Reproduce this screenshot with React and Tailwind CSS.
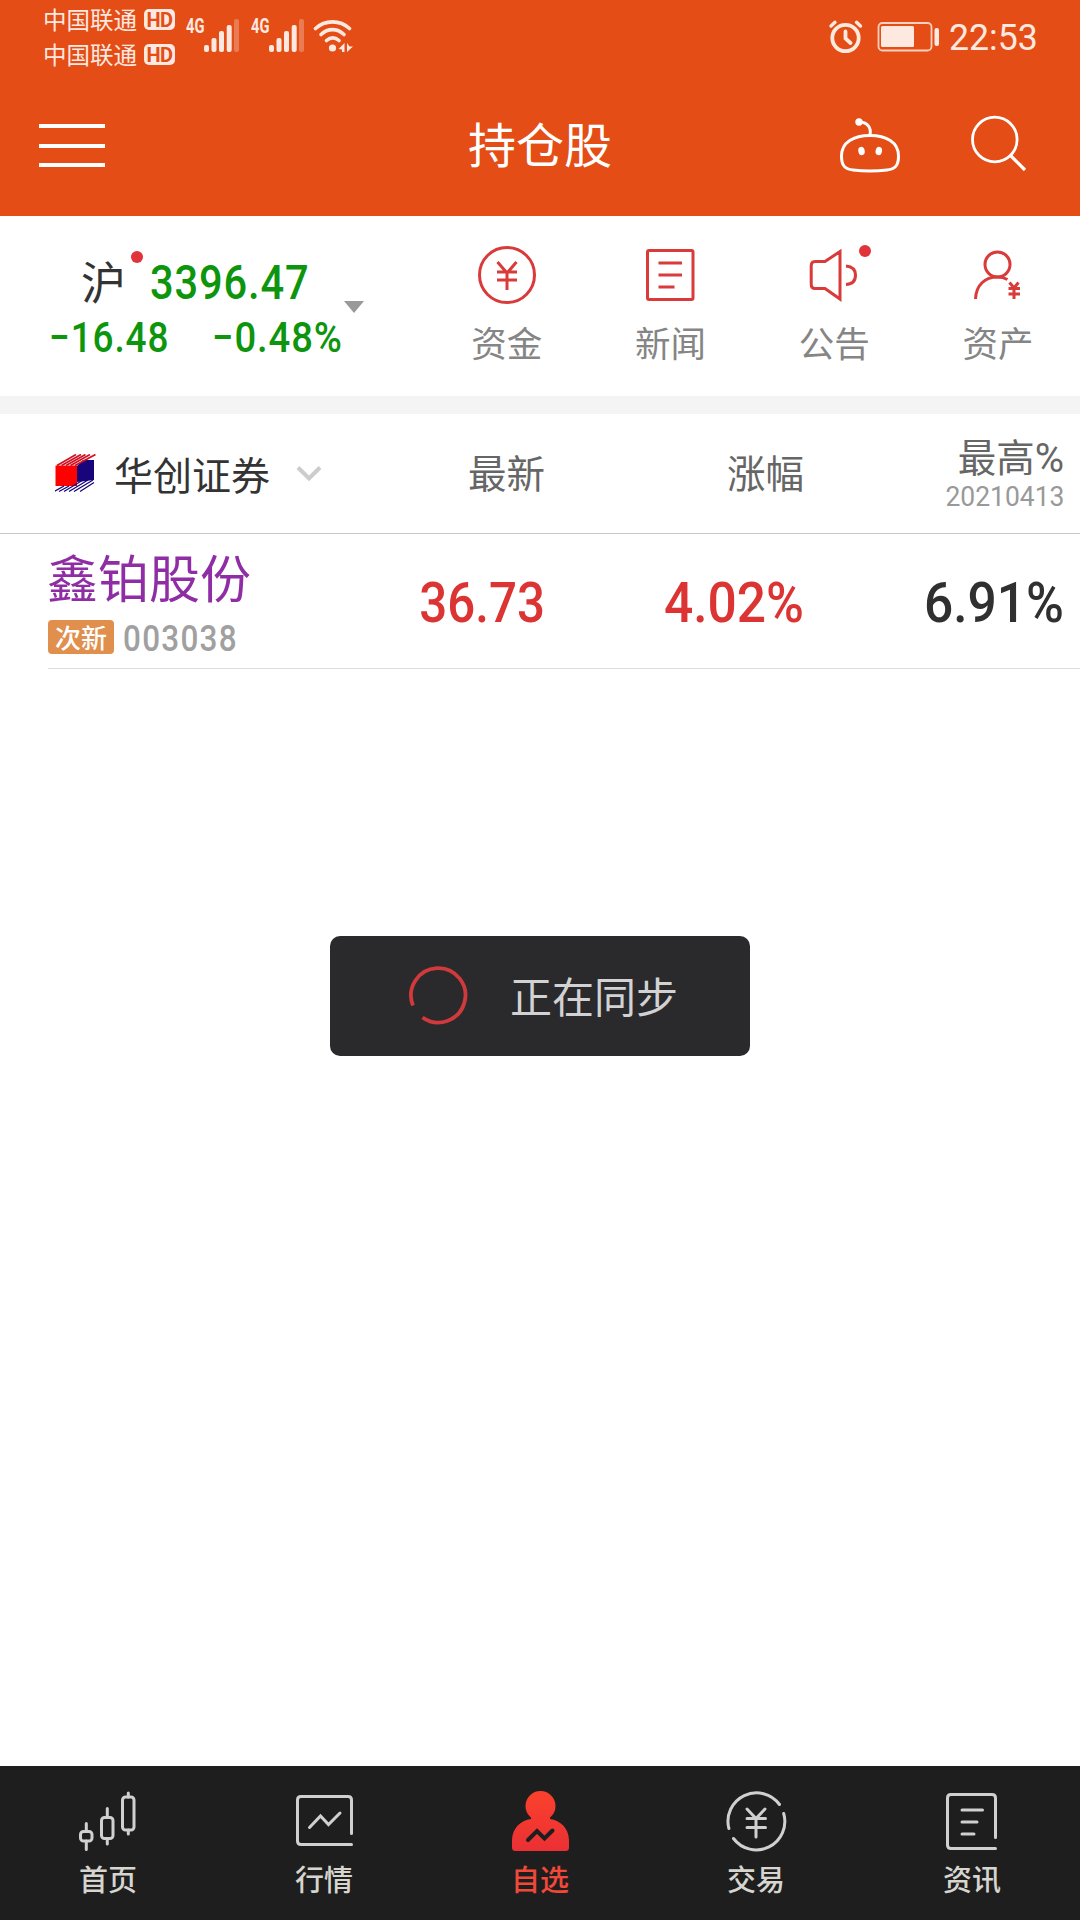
import React from "react";

const CJK = "font-['Noto_Sans_CJK_SC',sans-serif]";
const NUM = "font-['Roboto','Noto_Sans_CJK_SC',sans-serif]";

function Carrier() {
  return (
    <div className="flex h-[21px] items-center">
      <span className="-ml-px w-[101px] text-[23.5px] leading-[21px] whitespace-nowrap">中国联通</span>
      <span className="flex h-[21px] w-[31px] items-center justify-center rounded-[5px] bg-[#fde9e0] text-[20px] leading-none font-bold text-[#e44d15]">
        <span className={`${NUM} tracking-[-0.5px]`}>HD</span>
      </span>
    </div>
  );
}

function Signal() {
  return (
    <div className="flex w-[65px]">
      <span className={`${NUM} mt-[17px] w-[18px] text-[21px] leading-[19px] font-bold`}>
        <span className="inline-block origin-left scale-x-[0.7]">4G</span>
      </span>
      <svg className="mt-[19px]" width="35" height="33" viewBox="0 0 35 33" fill="#fde9e0">
        <rect x="0" y="26" width="5" height="7" rx="2" />
        <rect x="7.5" y="19" width="5" height="14" rx="2" />
        <rect x="15" y="12" width="5" height="21" rx="2" />
        <rect x="22.7" y="6" width="5" height="27" rx="2" />
        <rect x="30" y="0" width="5" height="33" rx="2" opacity="0.3" />
      </svg>
    </div>
  );
}

function StatusBar() {
  return (
    <div className={`${CJK} flex h-[72px] justify-between pr-[43px] pl-[44px] text-[#fde9e0]`}>
      <div className="flex">
        <div className="flex w-[142px] flex-col gap-[14px] pt-[9px]">
          <Carrier />
          <Carrier />
        </div>
        <Signal />
        <Signal />
        <svg className="mt-[18px] -ml-[3px]" width="42" height="36" viewBox="0 0 42 36" fill="none" stroke="#fde9e0" strokeWidth="3.6" strokeLinecap="round">
          <path d="M2.500 10.500C12 1.600 27 1.600 36.500 10.500" />
          <path d="M8 16.500C15 10 24 10 31 16.500" />
          <path d="M13.500 22.500C17.500 19 22 19 26 22.500" />
          <circle cx="19.500" cy="30" r="3.600" fill="#fde9e0" stroke="none" />
          <path d="M31.500 25V34H29V31.500L25.500 31Z M34 25V34L40 28.500H36.500Z" fill="#fde9e0" stroke="none" />
        </svg>
      </div>
      <div className="flex">
        <svg className="mt-[19px]" width="36" height="36" viewBox="0 0 36 36" fill="none" stroke="#fde9e0" strokeWidth="3.8" strokeLinecap="round">
          <circle cx="17.500" cy="19" r="13.200" />
          <path d="M17.500 12.500V19.500L22.500 24" />
          <path d="M3 7L7 3.300M28.500 3.300L32.500 7" strokeWidth="3.4" />
        </svg>
        <svg className="ml-[13px] mt-[21px]" width="64" height="31" viewBox="0 0 64 31" fill="none">
          <rect x="1.500" y="2" width="53" height="27.500" rx="4" stroke="#fbd0bf" strokeWidth="1.8" />
          <rect x="4" y="5" width="33" height="21" rx="1.500" fill="#fde9e0" />
          <rect x="57.500" y="7" width="4.500" height="18" rx="2" fill="#fde9e0" />
        </svg>
        <span className={`${NUM} mt-[18px] ml-[8px] w-[88px] text-[36px] leading-[40px] whitespace-nowrap`}>
          <span className="inline-block origin-left scale-x-[0.99]">22:53</span>
        </span>
      </div>
    </div>
  );
}

function TitleBar() {
  return (
    <div className="grid h-[144px] grid-cols-3 text-white">
      <div className="flex flex-col gap-[16px] pt-[52px] pl-[39px]">
        <i className="h-[4px] w-[66px] bg-white" />
        <i className="h-[4px] w-[66px] bg-white" />
        <i className="-mt-px h-[4px] w-[66px] bg-white" />
      </div>
      <h1 className={`${CJK} pt-[34px] text-center text-[48px] leading-[72px]`}>持仓股</h1>
      <div className="flex justify-end pr-[52px]">
        <svg className="mt-[43px]" width="64" height="60" viewBox="0 0 64 60" fill="none" stroke="#fff" strokeWidth="3">
          <path d="M32 20.500C48 20.500 60.500 27 60.500 41C60.500 51 57 54 49 55C38 56.300 26 56.300 15 55C7 54 3.500 51 3.500 41C3.500 27 16 20.500 32 20.500Z" />
          <path d="M32 20C33.500 12.500 29.500 7.500 22 7" />
          <circle cx="21" cy="7" r="3.700" fill="#fff" stroke="none" />
          <ellipse cx="23.500" cy="36" rx="3.200" ry="4.200" fill="#fff" stroke="none" transform="rotate(-12 23.500 36)" />
          <ellipse cx="40.800" cy="36" rx="3.200" ry="4.200" fill="#fff" stroke="none" transform="rotate(12 40.800 36)" />
        </svg>
        <svg className="mt-[42px] ml-[66px]" width="60" height="60" viewBox="0 0 60 60" fill="none" stroke="#fff" strokeWidth="2.800">
          <circle cx="26.800" cy="25.500" r="22.300" />
          <path d="M42.500 41.500L57 56" strokeWidth="3.200" />
        </svg>
      </div>
    </div>
  );
}

const shortcuts = [
  {
    label: "资金",
    icon: (
      <>
        <circle cx="32" cy="32" r="27.500" />
        <path d="M22.500 19L32 30L41.500 19M22 29H42M22 37H42M32 29V47" />
      </>
    ),
  },
  {
    label: "新闻",
    icon: (
      <>
        <rect x="8.500" y="7.500" width="45.500" height="49" rx="1.500" />
        <path d="M19.500 20H43M19.500 32H43M19.500 44H35.500" />
      </>
    ),
  },
  {
    label: "公告",
    dot: true,
    icon: (
      <>
        <path d="M38 8.500V56L23 45.500H13Q9.200 45.500 9.200 41V23Q9.200 18.500 13 18.500H23Z" />
        <path d="M44 23Q53.500 24 53.500 32Q53.500 41 44 41.500" />
      </>
    ),
  },
  {
    label: "资产",
    icon: (
      <>
        <circle cx="31.500" cy="21.500" r="12.500" />
        <path d="M9.500 56C10 42 19 34 31.500 34Q37 34 41.500 36.500" />
        <path d="M43.500 39.500L48 45L52.500 39.500M42.500 45.500H54M42.500 51H54M48 45V56" />
      </>
    ),
  },
];

function MarketStrip() {
  return (
    <section className={`${CJK} flex h-[180px] bg-white`}>
      <div className="flex w-[425px] pl-[50px]">
        <div className="w-[294px] pt-[34px] font-medium text-[#0d950d]">
          <div className="flex h-[66px]">
            <span className="relative ml-[31px] w-[69px] text-[45px] leading-[62px] font-normal text-[#333]">
              沪
              <i className="absolute top-px left-[50px] size-[12px] rounded-full bg-[#e1333a]" />
            </span>
            <span className={`${NUM} w-[160px] origin-left scale-x-[0.85] text-[49px] leading-[66px] tracking-[1px] whitespace-nowrap`}>3396.47</span>
          </div>
          <div className={`${NUM} flex h-[44px] text-[42px] leading-[44px] tracking-[1px] whitespace-nowrap`}>
            <span className="-ml-px w-[163px] origin-left scale-x-[0.88]">−16.48</span>
            <span className="w-[130px] origin-left scale-x-[0.91]">−0.48%</span>
          </div>
        </div>
        <svg className="mt-[85px]" width="20" height="12" viewBox="0 0 20 12" fill="#999">
          <path d="M0 0H20L10 12Z" />
        </svg>
      </div>
      <div className="grid flex-1 grid-cols-4">
        {shortcuts.map((s) => (
          <div key={s.label} className="flex flex-col items-center pt-[27px]">
            <div className="relative">
              <svg width="64" height="64" viewBox="0 0 64 64" fill="none" stroke="#d93a3a" strokeWidth="3">
                {s.icon}
              </svg>
              {s.dot && <i className="absolute top-[2px] right-[-5px] size-[12px] rounded-full bg-[#e1333a]" />}
            </div>
            <span className="mt-[10px] text-[35.500px] leading-[50px] text-[#858585]">{s.label}</span>
          </div>
        ))}
      </div>
    </section>
  );
}

function BrokerLogo() {
  return (
    <svg width="42" height="40" viewBox="0 0 42 40">
      <path d="M22 12L28 6H39V26L22 28Z" fill="#18057c" />
      <path d="M0.500 11.500H22V32H0.500Z" fill="#f00" />
      <path d="M2 11.500L21 0.500M6.500 11.500L26 0.500M11 11.500L30.500 0.500M15.500 11.500L35 0.500M20 11.500L40.500 0.500" stroke="#d01020" strokeWidth="1.700" />
      <path d="M-1 37.500L9 32M4 37.500L14 32M9 37.500L28 26M14 37.500L33 26M19 37.500L38 26M25 37.500L39 28.500" stroke="#18057c" strokeWidth="1.300" />
    </svg>
  );
}

function Holdings() {
  return (
    <section className={CJK}>
      <div className="grid h-[120px] grid-cols-[340px_205px_259px_260px] border-b border-[#c8c8c8] pr-[16px] text-[38.500px] leading-[56px] text-[#666]">
        <div className="flex items-start pt-[40px] pl-[55px] text-[#333]">
          <BrokerLogo />
          <span className="-mt-[9px] ml-[17px] w-[182px] text-[39px] whitespace-nowrap">华创证券</span>
          <svg className="mt-[11px]" width="26" height="18" viewBox="0 0 26 18" fill="none" stroke="#ccc" strokeWidth="4">
            <path d="M2 2.500L13 13.500L24 2.500" />
          </svg>
        </div>
        <span className="pt-[29px] text-right">最新</span>
        <span className="pt-[29px] text-right">涨幅</span>
        <div className="flex flex-col items-end pt-[13px]">
          <span className="whitespace-nowrap">
            最高<span className={`${NUM} text-[40px]`}>%</span>
          </span>
          <span className={`${NUM} -mt-[5px] origin-right scale-x-[0.98] text-[27px] leading-[30px] text-[#999]`}>20210413</span>
        </div>
      </div>
      <div className={`${NUM} ml-[48px] grid h-[135px] grid-cols-[292px_205px_259px_260px] border-b border-[#ddd] pr-[16px] text-[56px] leading-[138px] font-medium`}>
        <div className="leading-normal font-normal">
          <div className={`${CJK} -ml-px pt-[4px] text-[51px] leading-[76px] whitespace-nowrap text-[#8f2da5]`}>鑫铂股份</div>
          <div className="flex items-start pt-[6px]">
            <span className={`${CJK} flex h-[34px] w-[66px] items-center justify-center rounded-[4px] bg-[#e08f4d] text-[26px] leading-[30px] font-medium text-white`}>次新</span>
            <span className="mt-[2px] ml-[9px] w-[112px] origin-left scale-x-[0.85] text-[37px] leading-[34px] font-medium tracking-[1.500px] text-[#a0a0a0]">003038</span>
          </div>
        </div>
        <span className="origin-right scale-x-[0.88] text-right text-[#dc3333]">36.73</span>
        <span className="origin-right scale-x-[0.92] text-right text-[#dc3333]">4.02%</span>
        <span className="origin-right scale-x-[0.92] text-right text-[#303030]">6.91%</span>
      </div>
    </section>
  );
}

function SyncToast() {
  return (
    <div className={`${CJK} mx-auto mt-[267px] flex h-[120px] w-[420px] items-center rounded-[10px] bg-[#2a2a2c] pl-[78px] text-[42px] text-[#d2d2d4]`}>
      <svg width="60" height="60" viewBox="0 0 60 60" fill="none" stroke="#d03a3c" strokeWidth="3.800">
        <path d="M5 39.500A27.200 27.200 0 1 1 14.500 51.500" />
      </svg>
      <span className="-mt-[2px] ml-[42px] leading-[60px]">正在同步</span>
    </div>
  );
}

const tabs = [
  {
    label: "首页",
    icon: (
      <>
        <rect x="2.500" y="41.500" width="11.500" height="9.500" rx="3" />
        <path d="M8.300 33.500V41M8.300 51V59.500" />
        <rect x="23.500" y="27.500" width="11.500" height="21" rx="3" />
        <path d="M29.300 18.500V27M29.300 49V54" />
        <rect x="44.500" y="7" width="11.500" height="33" rx="3" />
        <path d="M50.300 3V7M50.300 40V44" />
      </>
    ),
  },
  {
    label: "行情",
    icon: (
      <>
        <path d="M57.500 43.500V10Q57.500 6.500 54 6.500H7Q3.500 6.500 3.500 10V51Q3.500 54.500 7 54.500H57.500" />
        <path d="M15.500 37.500L26.500 26L34.500 34.500L46 23" />
      </>
    ),
  },
  {
    label: "自选",
    active: true,
    icon: (
      <>
        <defs>
          <linearGradient id="person" gradientUnits="userSpaceOnUse" x1="0" y1="1" x2="0" y2="61">
            <stop offset="0" stopColor="#fb412c" />
            <stop offset="1" stopColor="#ea3034" />
          </linearGradient>
        </defs>
        <g fill="url(#person)" stroke="none">
          <circle cx="30.500" cy="16" r="15" />
          <path d="M21 26V29C10.500 30.500 2.500 38 2 50V57.500Q2 61 5.500 61H55.500Q59 61 59 57.500V50C58.500 38 50.500 30.500 40 29V26Z" />
        </g>
        <path d="M18 50L27 41L34.500 48.500L42.500 40.500" stroke="#1e1e1e" strokeWidth="4" />
      </>
    ),
  },
  {
    label: "交易",
    icon: (
      <>
        <path d="M2.900 38.500A28.500 28.500 0 0 1 53.500 14.500M57.700 23.500A28.500 28.500 0 0 1 7.500 48.500" />
        <path d="M21 19L30 28.500L39 19M21 28.500H39.500M21 37.500H39.500M30 28.500V47" />
      </>
    ),
  },
  {
    label: "资讯",
    icon: (
      <>
        <path d="M53.500 47.500V8Q53.500 4.500 50 4.500H9Q5.500 4.500 5.500 8V55Q5.500 58.500 9 58.500H53.500" />
        <path d="M20 20H40.500M20 32H35M20 44H32" />
      </>
    ),
  },
];

function TabBar() {
  return (
    <nav className={`${CJK} mt-auto grid h-[154px] grid-cols-5 bg-[#1e1e1e]`}>
      {tabs.map((t) => (
        <div key={t.label} className="flex flex-col items-center pt-[24px]">
          <svg width="60" height="64" viewBox="0 0 60 64" className="overflow-visible" fill="none" stroke="#d0d0d0" strokeWidth="3" strokeLinecap="round">
            {t.icon}
          </svg>
          <span className={t.active ? "mt-[4px] text-[29px] leading-[40px] font-medium text-[#f0493a]" : "mt-[4px] text-[29px] leading-[40px] font-medium text-[#d6d5cf]"}>{t.label}</span>
        </div>
      ))}
    </nav>
  );
}

export default function App() {
  return (
    <main lang="zh-CN" className="flex h-[1920px] w-[1080px] flex-col overflow-hidden bg-white">
      <header className="h-[216px] bg-[#e44d15]">
        <StatusBar />
        <TitleBar />
      </header>
      <MarketStrip />
      <div className="h-[18px] bg-[#f4f4f4]" />
      <Holdings />
      <SyncToast />
      <TabBar />
    </main>
  );
}
